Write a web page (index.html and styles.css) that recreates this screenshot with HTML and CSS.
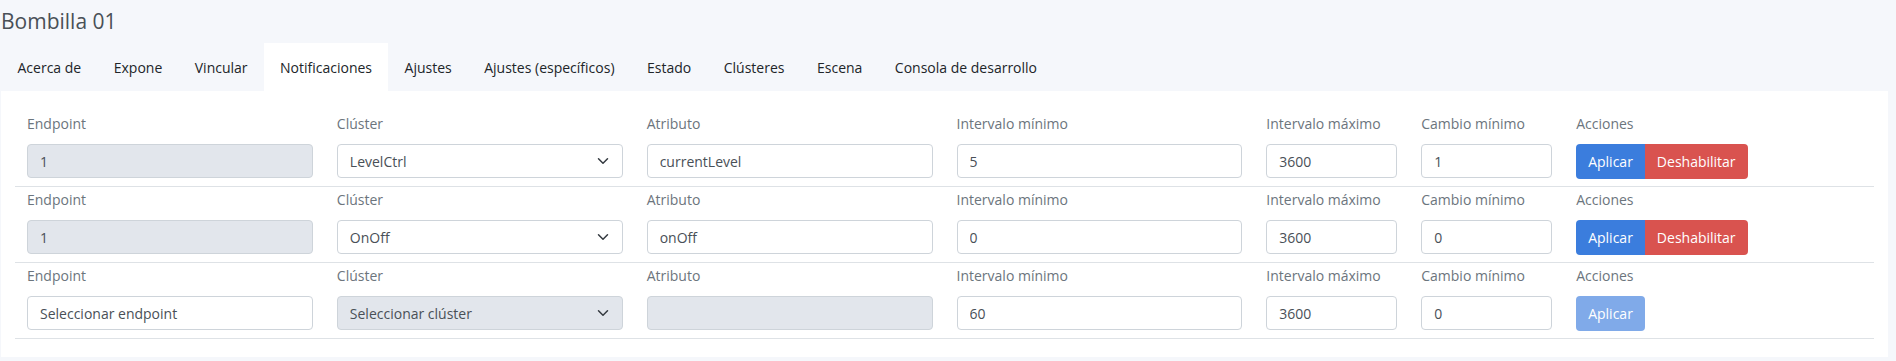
FILE: index.html
```html
<!DOCTYPE html>
<html lang="es">
<head>
    <meta charset="UTF-8">
    <title>Bombilla 01</title>
    <link rel="stylesheet" href="styles.css">
</head>
<body>
    <div class="page">
        <h1 class="title">Bombilla 01</h1>
        <ul class="tabs">
            <li class="tab">Acerca de</li>
            <li class="tab">Expone</li>
            <li class="tab">Vincular</li>
            <li class="tab active">Notificaciones</li>
            <li class="tab">Ajustes</li>
            <li class="tab">Ajustes (específicos)</li>
            <li class="tab">Estado</li>
            <li class="tab">Clústeres</li>
            <li class="tab">Escena</li>
            <li class="tab">Consola de desarrollo</li>
        </ul>
        <div class="panel">
            <div class="bind-row">
                <div class="field">
                    <label>Endpoint</label>
                    <input class="control" type="text" value="1" disabled>
                </div>
                <div class="field">
                    <label>Clúster</label>
                    <div class="select-wrap">
                        <select class="control">
                            <option>LevelCtrl</option>
                        </select>
                        <svg class="chevron" viewBox="0 0 16 16"><path d="M2 5l6 6 6-6"/></svg>
                    </div>
                </div>
                <div class="field">
                    <label>Atributo</label>
                    <input class="control" type="text" value="currentLevel">
                </div>
                <div class="field">
                    <label>Intervalo mínimo</label>
                    <input class="control" type="text" value="5">
                </div>
                <div class="field">
                    <label>Intervalo máximo</label>
                    <input class="control" type="text" value="3600">
                </div>
                <div class="field">
                    <label>Cambio mínimo</label>
                    <input class="control" type="text" value="1">
                </div>
                <div class="field">
                    <label>Acciones</label>
                    <div class="btn-group">
                        <button class="btn btn-primary">Aplicar</button>
                        <button class="btn btn-danger">Deshabilitar</button>
                    </div>
                </div>
            </div>
            <div class="bind-row">
                <div class="field">
                    <label>Endpoint</label>
                    <input class="control" type="text" value="1" disabled>
                </div>
                <div class="field">
                    <label>Clúster</label>
                    <div class="select-wrap">
                        <select class="control">
                            <option>OnOff</option>
                        </select>
                        <svg class="chevron" viewBox="0 0 16 16"><path d="M2 5l6 6 6-6"/></svg>
                    </div>
                </div>
                <div class="field">
                    <label>Atributo</label>
                    <input class="control" type="text" value="onOff">
                </div>
                <div class="field">
                    <label>Intervalo mínimo</label>
                    <input class="control" type="text" value="0">
                </div>
                <div class="field">
                    <label>Intervalo máximo</label>
                    <input class="control" type="text" value="3600">
                </div>
                <div class="field">
                    <label>Cambio mínimo</label>
                    <input class="control" type="text" value="0">
                </div>
                <div class="field">
                    <label>Acciones</label>
                    <div class="btn-group">
                        <button class="btn btn-primary">Aplicar</button>
                        <button class="btn btn-danger">Deshabilitar</button>
                    </div>
                </div>
            </div>
            <div class="bind-row">
                <div class="field">
                    <label>Endpoint</label>
                    <input class="control" type="text" value="Seleccionar endpoint">
                </div>
                <div class="field">
                    <label>Clúster</label>
                    <div class="select-wrap">
                        <select class="control" disabled>
                            <option>Seleccionar clúster</option>
                        </select>
                        <svg class="chevron" viewBox="0 0 16 16"><path d="M2 5l6 6 6-6"/></svg>
                    </div>
                </div>
                <div class="field">
                    <label>Atributo</label>
                    <input class="control" type="text" value="" disabled>
                </div>
                <div class="field">
                    <label>Intervalo mínimo</label>
                    <input class="control" type="text" value="60">
                </div>
                <div class="field">
                    <label>Intervalo máximo</label>
                    <input class="control" type="text" value="3600">
                </div>
                <div class="field">
                    <label>Cambio mínimo</label>
                    <input class="control" type="text" value="0">
                </div>
                <div class="field">
                    <label>Acciones</label>
                    <div class="btn-group">
                        <button class="btn btn-primary" disabled>Aplicar</button>
                    </div>
                </div>
            </div>
        </div>
    </div>
</body>
</html>
```

FILE: styles.css
```css
body {
    margin: 0;
    font-family: "Open Sans", "Noto Sans", sans-serif;
    font-size: 14px;
    background-color: #f5f7fb;
    color: #212529;
}
.page {
    padding: 0 8px 0 1px;
}
.title {
    margin: 9px 0 0 0;
    font-size: 21px;
    font-weight: 500;
    line-height: 25px;
    color: #495057;
}
.tabs {
    display: flex;
    list-style: none;
    margin: 9px 0 0 0;
    padding: 0;
}
.tab {
    padding: 14px 16px 13px 16.5px;
    line-height: 21px;
    color: #212529;
}
.tab.active {
    background-color: white;
}
.panel {
    background-color: white;
    padding: 20px 14px 18px;
}
.bind-row {
    display: grid;
    grid-template-columns: 2fr 2fr 2fr 2fr 1fr 1fr 2fr;
    padding: 2px 0 7px;
    border-bottom: 1px solid #dee2e6;
}
.field {
    padding: 0 12px;
}
.field label {
    display: block;
    line-height: 21px;
    margin-bottom: 10px;
    color: #6c757d;
}
.control {
    display: block;
    width: 100%;
    height: 34px;
    box-sizing: border-box;
    padding: 0 12px;
    border: 1px solid #ced4da;
    border-radius: 4px;
    background-color: white;
    font-family: inherit;
    font-size: 14px;
    color: #495057;
    appearance: none;
    outline: none;
}
.control:disabled {
    background-color: #e2e6ec;
    opacity: 1;
}
.select-wrap {
    position: relative;
}
.chevron {
    position: absolute;
    right: 14px;
    top: 11px;
    width: 12px;
    height: 12px;
    fill: none;
    stroke: #343a40;
    stroke-width: 2;
    stroke-linecap: round;
    stroke-linejoin: round;
}
.btn-group {
    display: flex;
}
.btn {
    height: 35px;
    padding: 0 12px;
    border: none;
    font-family: inherit;
    font-size: 14px;
    color: white;
    cursor: pointer;
}
.btn:first-child {
    border-radius: 4px 0 0 4px;
}
.btn:last-child {
    border-radius: 0 4px 4px 0;
}
.btn:only-child {
    border-radius: 4px;
}
.btn-primary {
    background-color: #3b7ddd;
}
.btn-primary:disabled {
    background-color: #80aae9;
    cursor: default;
}
.btn-danger {
    background-color: #d9534f;
}
```
